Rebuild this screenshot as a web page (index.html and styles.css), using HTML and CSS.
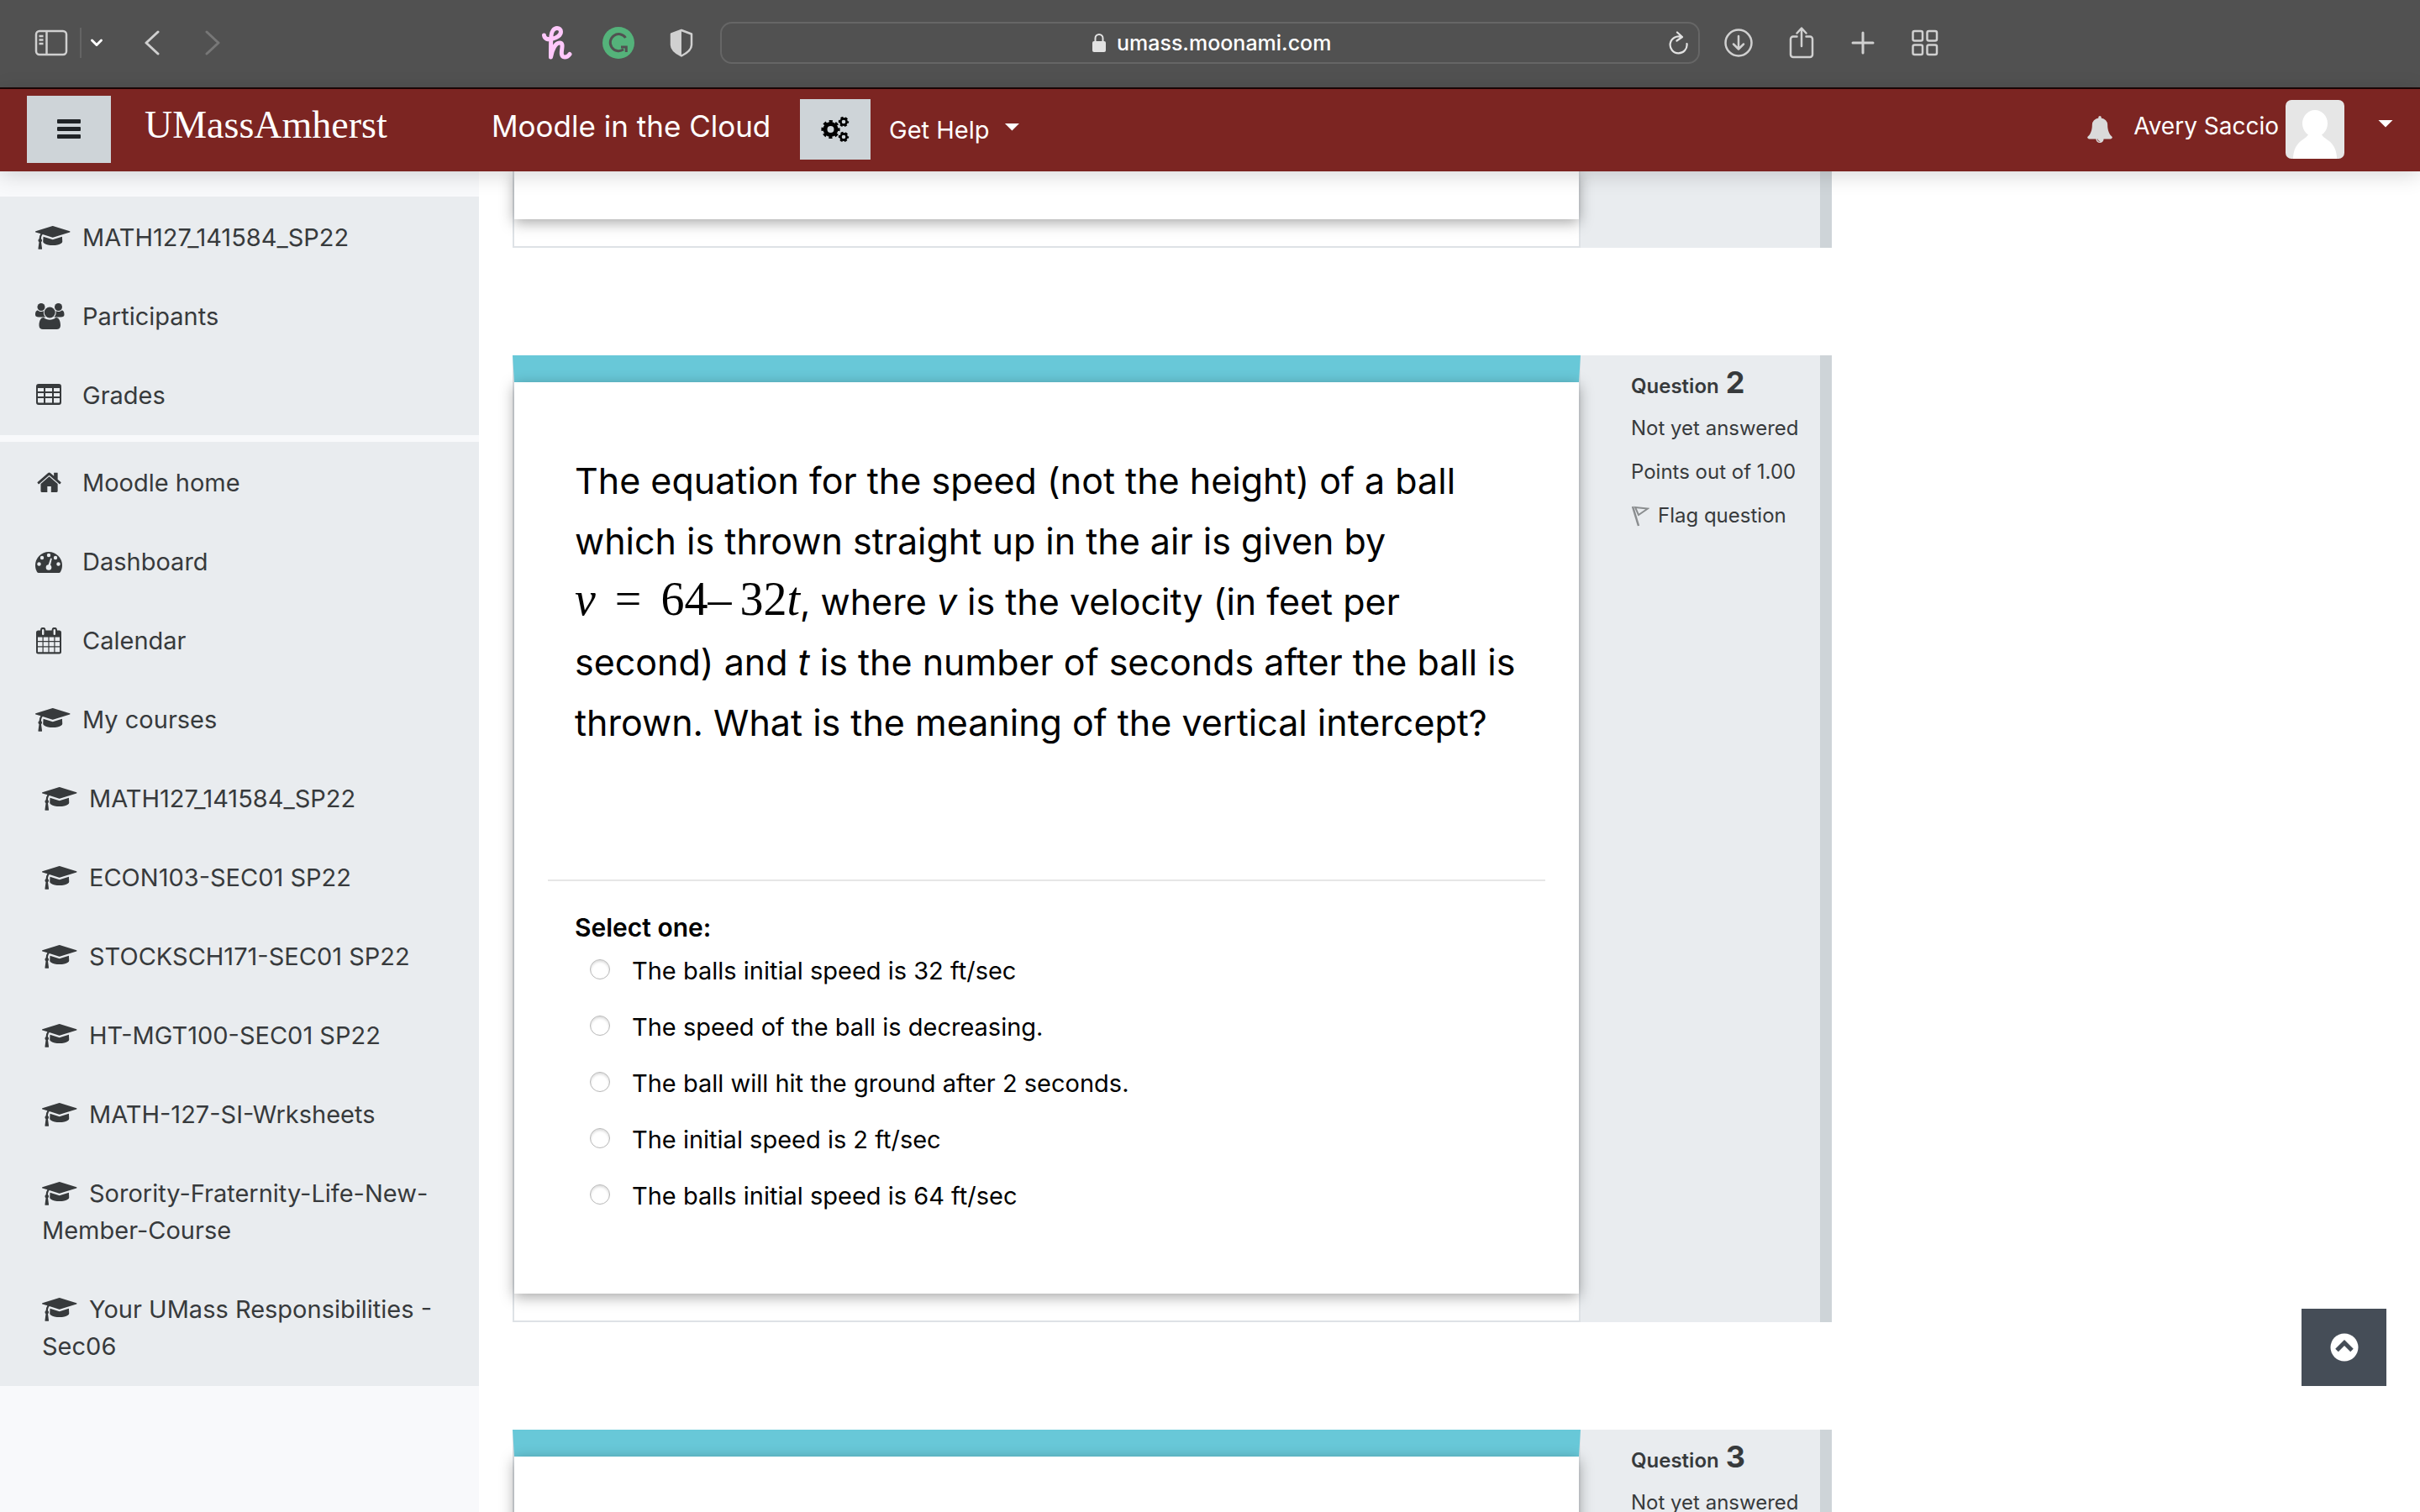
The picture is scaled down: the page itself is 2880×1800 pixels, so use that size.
FILE: index.html
```html
<!DOCTYPE html>
<html lang="en">
<head>
<meta charset="utf-8">
<title>Moodle in the Cloud</title>
<link rel="stylesheet" href="styles.css">
</head>
<body>
<svg class="sprite" aria-hidden="true">
  <symbol id="i-cap" viewBox="0 0 48 32"><path transform="translate(0 2) scale(.018)" d="M1774 708l18 316q4 69-82 128t-235 93.500-323 34.500-323-34.500-235-93.500-82-128l18-316 574 181q22 7 48 7t48-7zM2304 384q0 23-22 31l-1120 352q-4 1-10 1t-10-1l-652-206q-43 34-71 111.500t-34 178.500q63 36 63 109 0 69-58 107l58 433q2 14-8 25-9 11-24 11h-192q-15 0-24-11-10-11-8-25l58-433q-58-38-58-107 0-73 65-111 11-207 98-330l-333-104q-22-8-22-31t22-31l1120-352q4-1 10-1t10 1l1120 352q22 8 22 31z"/></symbol>
  <symbol id="i-users" viewBox="0 0 48 32"><circle cx="7" cy="4.500" r="4.500"/><circle cx="27.500" cy="4.500" r="4.500"/><circle cx="17.200" cy="11" r="6.500"/><path d="M3 8.500c2.500 2 5 1.800 7 .8-.6 3 .2 5.300 2.200 7.200H4c-2.500 0-4-.8-4-3 0-2.500.7-5 3-5zM31.500 8.500c-2.500 2-5 1.800-7 .8.600 3-.2 5.300-2.200 7.200h8.200c2.500 0 4-.8 4-3 0-2.500-.7-5-3-5zM10 17c4 3.500 10.500 3.500 14.500 0 4 0 5.500 5 5.500 9.500 0 3-2 4.500-4.500 4.500H9c-2.500 0-4.500-1.500-4.500-4.500C4.500 22 6 17 10 17z"/></symbol>
  <symbol id="i-table" viewBox="0 0 48 32"><path fill-rule="evenodd" d="M4 2h24a3 3 0 0 1 3 3v19a3 3 0 0 1-3 3H4a3 3 0 0 1-3-3V5a3 3 0 0 1 3-3zM3 7v4h7V7zM12 7v4h8V7zM22 7v4h7V7zM3 13v4h7v-4zM12 13v4h8v-4zM22 13v4h7v-4zM3 19v4.500q0 1 1 1h6V19zM12 19v5.500h8V19zM22 19v5.500h6q1 0 1-1V19z"/></symbol>
  <symbol id="i-home" viewBox="0 0 48 32"><path transform="translate(2 -1) scale(.0175 .0182)" d="M1408 992v480q0 26-19 45t-45 19h-384v-384h-256v384h-384q-26 0-45-19t-19-45v-480q0-1 .5-3t.5-3l575-474 575 474q1 2 1 6zm223-69l-62 74q-8 9-21 11h-3q-13 0-21-7l-692-577-692 577q-12 8-24 7-13-2-21-11l-62-74q-8-10-7-23.500t11-21.500l719-599q32-26 76-26t76 26l244 204v-195q0-14 9-23t23-9h192q14 0 23 9t9 23v408l219 182q10 8 11 21.500t-7 23.500z"/></symbol>
  <symbol id="i-dash" viewBox="0 0 48 32"><path d="M16 4a16 16 0 0 1 16 16c0 3-.8 5.500-2 7.800-.5.800-1 1.200-1.800 1.200H3.800c-.8 0-1.300-.4-1.800-1.200C.8 25.500 0 23 0 20A16 16 0 0 1 16 4z"/><g fill="#e9ecef"><circle cx="4.500" cy="18.500" r="2.200"/><circle cx="27.500" cy="18.500" r="2.200"/><circle cx="8" cy="11" r="2.200"/><circle cx="24" cy="11" r="2.200"/><circle cx="16" cy="8" r="2.200"/><circle cx="16" cy="22.500" r="3.300"/><path d="M15 21l3.200-9.500 1.600.4L17.500 22z"/></g></symbol>
  <symbol id="i-cal" viewBox="0 0 48 32"><path fill-rule="evenodd" d="M3.500 3.500H6V3a3.200 3.200 0 0 1 6.400 0v.5h7.200V3A3.200 3.200 0 0 1 26 3v.5h2.500A2.500 2.500 0 0 1 31 6v23a2.500 2.500 0 0 1-2.500 2.500h-25A2.500 2.500 0 0 1 1 29V6a2.500 2.500 0 0 1 2.500-2.500zM8 3v5q0 1 1.200 1t1.200-1V3Q10.400 2 9.200 2T8 3zM21.600 3v5q0 1 1.200 1T24 8V3q0-1-1.200-1t-1.200 1zM3 11.500V16h5.500v-4.500zM9.700 11.500V16h5.700v-4.500zM16.600 11.500V16h5.700v-4.500zM23.500 11.500V16H29v-4.500zM3 17.200v5h5.500v-5zM9.700 17.200v5h5.700v-5zM16.600 17.200v5h5.700v-5zM23.500 17.200v5H29v-5zM3 23.400v5.900h5.500v-5.900zM9.700 23.400v5.900h5.700v-5.900zM16.600 23.400v5.900h5.700v-5.900zM23.500 23.400v5.900H29v-5.900z"/></symbol>
</svg>

<div class="window">
  <div class="toolbar">
    <button class="tool tool-sidebar" aria-label="Show sidebar"><svg width="40" height="32" viewBox="0 0 40 32" fill="none" stroke="#d0d0d0" stroke-width="2.500"><rect x="2" y="2" width="36" height="28" rx="4"/><path d="M14.500 2v28M5.500 8h5M5.500 12.500h5M5.500 17h5"/></svg></button>
    <span class="divider"></span>
    <button class="tool tool-menu" aria-label="Tab groups"><svg width="16" height="12" viewBox="0 0 16 12" fill="none" stroke="#fff" stroke-width="3" stroke-linecap="round" stroke-linejoin="round"><path d="M2.500 3L8 8.500 13.500 3"/></svg></button>
    <button class="tool tool-back" aria-label="Back"><svg width="20" height="30" viewBox="0 0 20 30" fill="none" stroke="#d0d0d0" stroke-width="3" stroke-linecap="round" stroke-linejoin="round"><path d="M17 2L3 15l14 13"/></svg></button>
    <button class="tool tool-forward" aria-label="Forward"><svg width="20" height="30" viewBox="0 0 20 30" fill="none" stroke="#777" stroke-width="3" stroke-linecap="round" stroke-linejoin="round"><path d="M3 2l14 13L3 28"/></svg></button>
    <button class="tool tool-honey" aria-label="Honey"><svg width="36" height="40" viewBox="0 0 36 40" fill="none" stroke="#ffc8fb" stroke-width="5" stroke-linecap="round" stroke-linejoin="round"><path d="M2.500 11c.5 4 4 5.500 9 4.500 6-1.200 11-4.500 11-8.800 0-2.700-2-4.200-4.500-4.200-4 0-6.500 4-7 9-.5 6-.5 15-.5 25.500 1.500-9 5.500-17 10.500-17 3.500 0 3.300 3.500 2.800 7-.7 4.500-1.300 10 3.200 10 2.500 0 4.500-1.500 6-3.500"/></svg></button>
    <button class="tool tool-grammar" aria-label="Grammarly"><svg width="38" height="38" viewBox="0 0 38 38" fill="none"><circle cx="19" cy="19" r="19" fill="#54b27a"/><path d="M27.500 13A10 10 0 1 0 25 26.800M22 24h6.300v6" stroke="#515151" stroke-width="3"/></svg></button>
    <button class="tool tool-shield" aria-label="Privacy report"><svg width="28" height="34" viewBox="0 0 28 34"><path d="M14 2l12 4.500v13c0 6-6 10-12 13-6-3-12-7-12-13v-13z" fill="none" stroke="#d0d0d0" stroke-width="2.500" stroke-linejoin="round"/><path d="M14 2v30.500c-6-3-12-7-12-13v-13z" fill="#d0d0d0"/></svg></button>
    <div class="address">
      <svg width="18" height="24" viewBox="0 0 18 24"><rect x="1" y="10" width="16" height="13" rx="2" fill="#e2e2e2"/><path d="M4.500 11V6.500a4.500 4.500 0 0 1 9 0V11" fill="none" stroke="#e2e2e2" stroke-width="2"/></svg>
      <input class="address-input" type="text" aria-label="Address" value="umass.moonami.com">
      <button class="tool reload" aria-label="Reload"><svg width="24" height="28" viewBox="0 0 24 28" fill="none" stroke="#e2e2e2" stroke-width="2.200" stroke-linecap="round" stroke-linejoin="round"><path d="M16 7a10 10 0 1 0 6.500 8M11 1.500l6 5.500-6.500 4.500"/></svg></button>
    </div>
    <button class="tool tool-down" aria-label="Downloads"><svg width="34" height="34" viewBox="0 0 34 34" fill="none" stroke="#d0d0d0" stroke-width="2.500" stroke-linecap="round" stroke-linejoin="round"><circle cx="17" cy="17" r="15.500"/><path d="M17 9v15M11 18.500l6 6 6-6"/></svg></button>
    <button class="tool tool-share" aria-label="Share"><svg width="30" height="40" viewBox="0 0 30 40" fill="none" stroke="#d0d0d0" stroke-width="2.500" stroke-linecap="round" stroke-linejoin="round"><path d="M9.500 12.500H5a3 3 0 0 0-3 3V34a3 3 0 0 0 3 3h20a3 3 0 0 0 3-3V15.500a3 3 0 0 0-3-3h-4.500M15 24V3M9.500 8.500L15 2.500l5.500 6"/></svg></button>
    <button class="tool tool-plus" aria-label="New tab"><svg width="28" height="28" viewBox="0 0 28 28" fill="none" stroke="#d0d0d0" stroke-width="3" stroke-linecap="round"><path d="M14 2v24M2 14h24"/></svg></button>
    <button class="tool tool-grid" aria-label="Tab overview"><svg width="32" height="32" viewBox="0 0 32 32" fill="none" stroke="#d0d0d0" stroke-width="2.500"><rect x="1.500" y="2" width="11.500" height="11.500" rx="2"/><rect x="18.500" y="2" width="11.500" height="11.500" rx="2"/><rect x="1.500" y="18.500" width="11.500" height="11.500" rx="2"/><rect x="18.500" y="18.500" width="11.500" height="11.500" rx="2"/></svg></button>
  </div>

  <header class="navbar">
    <button class="drawer-toggle" aria-label="Side panel"><svg width="28" height="24" viewBox="0 0 28 24" fill="#1f2326"><rect y="0" width="28" height="5" rx="1"/><rect y="9" width="28" height="5" rx="1"/><rect y="18" width="28" height="5" rx="1"/></svg></button>
    <a class="brand" href="#">UMassAmherst</a>
    <a class="site-name" href="#">Moodle in the Cloud</a>
    <button class="settings" aria-label="Settings"><svg width="34" height="32" viewBox="0 0 34 32" fill="none" stroke="#000"><circle cx="11.500" cy="16" r="6.500" stroke-width="5"/><circle cx="11.500" cy="16" r="9.500" stroke-width="3.200" stroke-dasharray="4 3.461" stroke-dashoffset="2"/><circle cx="27" cy="7" r="3.600" stroke-width="2.600"/><circle cx="27" cy="7" r="5.200" stroke-width="2" stroke-dasharray="3 2.445" stroke-dashoffset="1.500"/><circle cx="27" cy="25" r="3.600" stroke-width="2.600"/><circle cx="27" cy="25" r="5.200" stroke-width="2" stroke-dasharray="3 2.445" stroke-dashoffset="1.500"/></svg></button>
    <button class="help">Get Help <span class="caret"></span></button>
    <button class="bell" aria-label="Notifications"><svg width="32" height="34" viewBox="0 0 1792 1792" fill="#dadada"><path d="M912 1696q0-16-16-16-59 0-101-42t-42-101q0-16-16-16t-16 16q0 73 51 124t124 51q16 0 16-16zm816-288q0 52-38 90t-90 38h-448q0 106-75 181t-181 75-181-75-75-181h-448q-52 0-90-38t-38-90q50-42 91-88t85-119.500 74.500-158.500 50-206 19.500-260q0-152 117-282.500t307-158.500q-8-19-8-39 0-40 28-68t68-28 68 28 28 68q0 20-8 39 190 28 307 158.500t117 282.500q0 139 19.500 260t50 206 74.500 158.500 85 119.500 91 88z"/></svg></button>
    <button class="user"><span class="user-name">Avery Saccio</span><svg width="70" height="70" viewBox="0 0 70 70"><defs><clipPath id="av"><rect width="70" height="70" rx="7"/></clipPath></defs><g clip-path="url(#av)"><rect width="70" height="70" fill="#e6e6e6"/><ellipse cx="35" cy="28" rx="15" ry="16" fill="#fff"/><path d="M28 38h14c1 6 5 7 10 11 6 5 9 12 9 21H9c0-9 3-16 9-21 5-4 9-5 10-11z" fill="#fff"/></g></svg><span class="caret"></span></button>
  </header>

  <div class="page">
    <nav class="drawer">
      <ul class="nav-group">
        <li><a href="#"><svg class="icon"><use href="#i-cap"/></svg>MATH127_141584_SP22</a></li>
        <li><a href="#"><svg class="icon"><use href="#i-users"/></svg>Participants</a></li>
        <li><a href="#"><svg class="icon"><use href="#i-table"/></svg>Grades</a></li>
      </ul>
      <ul class="nav-group">
        <li><a href="#"><svg class="icon"><use href="#i-home"/></svg>Moodle home</a></li>
        <li><a href="#"><svg class="icon"><use href="#i-dash"/></svg>Dashboard</a></li>
        <li><a href="#"><svg class="icon"><use href="#i-cal"/></svg>Calendar</a></li>
        <li><a href="#"><svg class="icon"><use href="#i-cap"/></svg>My courses</a></li>
        <li class="nested"><a href="#"><svg class="icon"><use href="#i-cap"/></svg>MATH127_141584_SP22</a></li>
        <li class="nested"><a href="#"><svg class="icon"><use href="#i-cap"/></svg>ECON103-SEC01 SP22</a></li>
        <li class="nested"><a href="#"><svg class="icon"><use href="#i-cap"/></svg>STOCKSCH171-SEC01 SP22</a></li>
        <li class="nested"><a href="#"><svg class="icon"><use href="#i-cap"/></svg>HT-MGT100-SEC01 SP22</a></li>
        <li class="nested"><a href="#"><svg class="icon"><use href="#i-cap"/></svg>MATH-127-SI-Wrksheets</a></li>
        <li class="nested"><a href="#"><svg class="icon"><use href="#i-cap"/></svg>Sorority-Fraternity-Life-New-Member-Course</a></li>
        <li class="nested"><a href="#"><svg class="icon"><use href="#i-cap"/></svg>Your UMass Responsibilities - Sec06</a></li>
      </ul>
    </nav>

    <main class="content">
      <section class="question">
        <div class="frame"><div class="card"></div></div>
        <aside class="info"></aside>
      </section>

      <section class="question">
        <div class="frame framed-top">
          <div class="card">
            <p class="prompt">The equation for the speed (not the height) of a ball which is thrown straight up in the air is given by <br><span class="math"><i>v</i><span class="eq">=</span>64<span class="minus">–</span>32<i>t</i></span>, where <i>v</i> is the velocity (in feet per second) and <i>t</i> is the number of seconds after the ball is thrown. What is the meaning of the vertical intercept?</p>
            <fieldset class="answers">
              <legend>Select one:</legend>
              <label><input type="radio" name="q2">The balls initial speed is 32 ft/sec</label>
              <label><input type="radio" name="q2">The speed of the ball is decreasing.</label>
              <label><input type="radio" name="q2">The ball will hit the ground after 2 seconds.</label>
              <label><input type="radio" name="q2">The initial speed is 2 ft/sec</label>
              <label><input type="radio" name="q2">The balls initial speed is 64 ft/sec</label>
            </fieldset>
          </div>
        </div>
        <aside class="info">
          <h3>Question <span class="qno">2</span></h3>
          <p>Not yet answered</p>
          <p>Points out of 1.00</p>
          <a class="flag" href="#"><svg width="22" height="26" viewBox="0 0 22 26" fill="none" stroke="#8a8d8f" stroke-width="2"><path d="M2 2l7 23" stroke-width="2.500"/><path d="M5 3l15 1.500L9 12z"/></svg>Flag question</a>
        </aside>
      </section>

      <section class="question">
        <div class="frame framed-top"><div class="card"></div></div>
        <aside class="info">
          <h3>Question <span class="qno">3</span></h3>
          <p>Not yet answered</p>
        </aside>
      </section>
    </main>
  </div>
  <button class="to-top" aria-label="Back to top"><svg width="34" height="34" viewBox="0 0 34 34"><circle cx="17" cy="17" r="16.500" fill="#fff"/><path d="M8 20.500l9-9 9 9" fill="none" stroke="#454d57" stroke-width="5"/></svg></button>
</div>
</body>
</html>
```
FILE: styles.css
```css
* { box-sizing: border-box; }
body {
  margin: 0;
  font-family: Inter, "Liberation Sans", sans-serif;
  font-size: 29px;
  color: #373a3c;
  background: #fff;
}
button { border: 0; padding: 0; background: none; font: inherit; color: inherit; }
a { color: inherit; text-decoration: none; }
svg { display: block; flex: none; }
.sprite { position: absolute; width: 0; height: 0; }
.window { height: 100vh; display: flex; flex-direction: column; overflow: hidden; }

/* browser toolbar */
.toolbar {
  flex: none;
  display: flex;
  align-items: center;
  height: 106px;
  padding: 0 0 2px 41px;
  background: #515151;
  border-bottom: 2px solid #1c0606;
}
.divider { width: 2px; height: 36px; margin: 0 10px 0 14px; background: #646464; }
.tool-back { margin-left: 48px; }
.tool-forward { margin-left: 52px; }
.tool-honey { margin-left: 382px; }
.tool-grammar { margin-left: 36px; }
.tool-shield { margin-left: 42px; }
.address {
  flex: 0 1 1166px;
  display: flex;
  align-items: center;
  justify-content: center;
  height: 50px;
  margin-left: 32px;
  padding: 0 12px 0 48px;
  border: 2px solid #666;
  border-radius: 14px;
}
.address > svg { margin-left: auto; }
.address-input {
  width: 264px;
  margin-left: 12px;
  padding: 0;
  border: 0;
  background: none;
  font: 500 25px/32px Inter, "Liberation Sans", sans-serif;
  color: #fff;
}
.reload { margin-left: auto; }
.tool-down { margin-left: 29px; }
.tool-share { margin-left: 43px; }
.tool-plus { margin-left: 44px; }
.tool-grid { margin-left: 44px; }

/* site header */
.navbar {
  position: relative;
  z-index: 2;
  flex: none;
  display: flex;
  align-items: center;
  height: 98px;
  padding: 0 32px 2px;
  background: #7c2522;
  color: #fff;
  box-shadow: 0 4px 24px rgba(0, 0, 0, .16);
}
.drawer-toggle { width: 100px; height: 80px; background: #ced4d8; }
.drawer-toggle svg, .settings svg { margin: 0 auto; }
.brand {
  width: 413px;
  margin-left: 40px;
  padding-bottom: 10px;
  font: 46px/56px "Liberation Serif", serif;
}
.site-name { width: 367px; padding-bottom: 8px; font-size: 35px; line-height: 44px; white-space: nowrap; }
.settings { width: 84px; height: 72px; background: #ced4d8; }
.help { display: flex; align-items: center; gap: 18px; margin-left: 22px; white-space: nowrap; }
.caret {
  width: 18px;
  height: 9px;
  margin-bottom: 6px;
  background: currentColor;
  clip-path: polygon(0 0, 100% 0, 50% 100%);
}
.bell { margin-left: auto; }
.user { display: flex; align-items: center; margin-left: 24px; }
.user-name { margin-right: 8px; padding-bottom: 8px; font-size: 28px; }
.user .caret { margin: 0 0 14px 40px; }

/* page body */
.page { flex: 1; min-height: 0; display: flex; align-items: stretch; }
.drawer { flex: none; width: 570px; padding-top: 30px; background: #f8f9fb; }
.nav-group { margin: 0 0 8px; padding: 2px 0 0; list-style: none; background: #e9ecef; }
.nav-group a { display: block; padding: 25px 32px 25px 42px; line-height: 44px; }
.nav-group .nested a { padding-left: 50px; }
.icon { display: inline-block; width: 48px; height: 32px; margin-right: 8px; vertical-align: -6px; fill: #373a3c; }

.content { flex: none; width: 1610px; padding: 0 0 0 40px; }
.question { display: flex; margin-bottom: 128px; }
.frame { position: relative; flex: 1; padding-bottom: 32px; border: 2px solid #dee2e6; border-top: 0; }
.framed-top { border-top: 32px solid #68c8d8; }
.card { min-height: 57px; background: #fff; box-shadow: 0 4px 16px rgba(0, 0, 0, .35); }
.question:last-child .card { min-height: 240px; }
.info {
  flex: none;
  width: 299px;
  padding: 10px 0 0 60px;
  background: #e9ecef;
  border-right: 14px solid #ced4d8;
  font-size: 24px;
  line-height: 36px;
}
.info h3 { margin: 0 0 10px; font-size: 24px; line-height: 44px; font-weight: 600; }
.qno { margin-left: 2px; font-size: 36px; font-weight: 700; }
.info p { margin: 0 0 16px; white-space: nowrap; }
.flag { display: flex; align-items: center; gap: 10px; white-space: nowrap; }

.prompt { margin: 0; padding: 81px 60px 151px 72px; font-size: 43px; line-height: 72px; color: #000; }
.math { font-family: "Liberation Serif", serif; font-size: 56px; line-height: 1; }
.eq { margin: 0 23px; }
.minus { margin-right: 10px; }
.answers {
  margin: 0 40px;
  padding: 37px 0 83px 32px;
  border: 0;
  border-top: 2px solid #e6e6e6;
  color: #000;
}
.answers legend { float: left; width: 100%; padding: 0; font-size: 30px; font-weight: 600; line-height: 36px; }
.answers label { clear: both; display: flex; align-items: center; line-height: 67px; }
.answers input {
  appearance: none;
  width: 24px;
  height: 24px;
  margin: 0 26px 4px 18px;
  border: 1px solid #b8b8b8;
  border-radius: 50%;
  box-shadow: inset 0 2px 3px rgba(0, 0, 0, .14);
}

.to-top {
  position: fixed;
  right: 40px;
  bottom: 150px;
  width: 101px;
  height: 92px;
  background: #454d57;
}
.to-top svg { margin: 0 auto; }
```
